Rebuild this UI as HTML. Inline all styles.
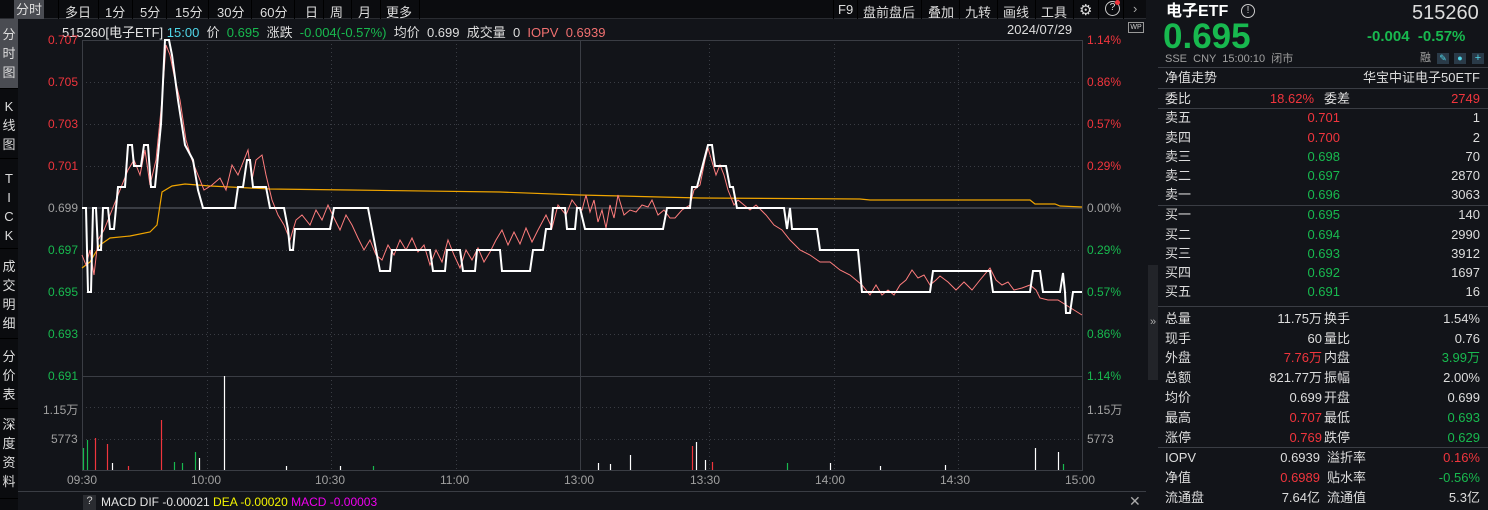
<!DOCTYPE html>
<html><head><meta charset="utf-8"><style>
*{margin:0;padding:0;box-sizing:border-box}
body{width:1488px;height:510px;background:#121419;overflow:hidden;position:relative;font-family:"Liberation Sans","Noto Sans CJK SC",sans-serif;color:#ddd;font-size:13px}
.a{position:absolute;white-space:nowrap}
.r{color:#f0353d}.g{color:#18b94f}.w{color:#e6e6e6}.gy{color:#a0a0a0}
.sep{position:absolute;top:0;width:1px;height:19px;background:#000}
.side{position:absolute;left:0;width:18px;text-align:center;font-size:13px;line-height:19px;color:#ddd;border-bottom:1px solid #000}
.row{position:absolute;left:1158px;width:326px;height:20px;font-size:13px;line-height:20px}
.row span{position:absolute}
</style></head><body>
<!-- top bar -->
<div class="a" style="left:0;top:0;width:1146px;height:19px;background:#0b0c0f;border-bottom:1px solid #2a2c31"></div>
<div class="a" style="left:14px;top:0;width:30px;height:19px;background:#4a4c52;text-align:center;line-height:19px">分时</div>
<div class="sep" style="left:58px"></div><div class="sep" style="left:98px"></div><div class="sep" style="left:132px"></div><div class="sep" style="left:166px"></div><div class="sep" style="left:208px"></div><div class="sep" style="left:251px"></div><div class="sep" style="left:294px"></div><div class="sep" style="left:323px"></div><div class="sep" style="left:351px"></div><div class="sep" style="left:380px"></div><div class="sep" style="left:419px"></div>
<div class="sep" style="left:833px"></div><div class="sep" style="left:857px"></div><div class="sep" style="left:921px"></div><div class="sep" style="left:959px"></div><div class="sep" style="left:997px"></div><div class="sep" style="left:1035px"></div><div class="sep" style="left:1073px"></div><div class="sep" style="left:1098px"></div><div class="sep" style="left:1123px"></div>
<div class="a" style="top:2px;left:65px;font-size:13px">多日</div>
<div class="a" style="top:2px;left:105px">1分</div>
<div class="a" style="top:2px;left:140px">5分</div>
<div class="a" style="top:2px;left:175px">15分</div>
<div class="a" style="top:2px;left:217px">30分</div>
<div class="a" style="top:2px;left:260px">60分</div>
<div class="a" style="top:2px;left:305px">日</div>
<div class="a" style="top:2px;left:330px">周</div>
<div class="a" style="top:2px;left:358px">月</div>
<div class="a" style="top:2px;left:386px">更多</div>
<div class="a" style="top:2px;left:838px">F9</div>
<div class="a" style="top:2px;left:863px">盘前盘后</div>
<div class="a" style="top:2px;left:928px">叠加</div>
<div class="a" style="top:2px;left:965px">九转</div>
<div class="a" style="top:2px;left:1003px">画线</div>
<div class="a" style="top:2px;left:1041px">工具</div>
<div class="a" style="top:1px;left:1079px;font-size:15px">⚙</div>
<div class="a" style="top:1px;left:1105px;width:15px;height:15px;border:1.5px solid #ccc;border-radius:50%;font-size:10px;text-align:center;line-height:12px">?</div>
<div class="a" style="top:0px;left:1115px;width:5px;height:5px;background:#f0353d;border-radius:50%"></div>
<div class="a" style="top:1px;left:1133px;color:#aaa">›</div>
<!-- sidebar -->
<div class="a" style="left:0;top:19px;width:18px;height:491px;background:#0b0c0f"></div>
<div class="side" style="top:19px;height:70px;background:#4a4c52;padding-top:6px">分<br>时<br>图</div>
<div class="side" style="top:89px;height:70px;padding-top:8px">K<br>线<br>图</div>
<div class="side" style="top:159px;height:90px;padding-top:10px">T<br>I<br>C<br>K</div>
<div class="side" style="top:249px;height:90px;padding-top:8px">成<br>交<br>明<br>细</div>
<div class="side" style="top:339px;height:70px;padding-top:8px">分<br>价<br>表</div>
<div class="side" style="top:409px;height:90px;padding-top:6px">深<br>度<br>资<br>料</div>
<!-- header line -->
<div class="a" style="top:22px;left:62px;font-size:13px"><span class="w">515260[电子ETF]</span> <span style="color:#4fd6e8">15:00</span> &nbsp;价 &nbsp;<span class="g">0.695</span> &nbsp;涨跌 &nbsp;<span class="g">-0.004(-0.57%)</span> &nbsp;均价 &nbsp;0.699 &nbsp;成交量 &nbsp;0 &nbsp;<span style="color:#f07070">IOPV &nbsp;0.6939</span></div>
<div class="a" style="top:22px;left:1007px">2024/07/29</div>
<div class="a" style="top:22px;left:1128px;width:16px;height:11px;border:1px solid #999;font-size:7px;line-height:9px;text-align:center;color:#ccc">WP</div>
<!-- left axis -->
<div class="a r" style="top:33px;left:48px;font-size:12px">0.707</div>
<div class="a r" style="top:75px;left:48px;font-size:12px">0.705</div>
<div class="a r" style="top:117px;left:48px;font-size:12px">0.703</div>
<div class="a r" style="top:159px;left:48px;font-size:12px">0.701</div>
<div class="a gy" style="top:201px;left:48px;font-size:12px">0.699</div>
<div class="a g" style="top:243px;left:48px;font-size:12px">0.697</div>
<div class="a g" style="top:285px;left:48px;font-size:12px">0.695</div>
<div class="a g" style="top:327px;left:48px;font-size:12px">0.693</div>
<div class="a g" style="top:369px;left:48px;font-size:12px">0.691</div>
<div class="a gy" style="top:401px;left:43px;font-size:12px">1.15万</div>
<div class="a gy" style="top:432px;left:51px;font-size:12px">5773</div>
<!-- right axis -->
<div class="a r" style="top:33px;left:1087px;font-size:12px">1.14%</div>
<div class="a r" style="top:75px;left:1087px;font-size:12px">0.86%</div>
<div class="a r" style="top:117px;left:1087px;font-size:12px">0.57%</div>
<div class="a r" style="top:159px;left:1087px;font-size:12px">0.29%</div>
<div class="a gy" style="top:201px;left:1087px;font-size:12px">0.00%</div>
<div class="a g" style="top:243px;left:1087px;font-size:12px">0.29%</div>
<div class="a g" style="top:285px;left:1087px;font-size:12px">0.57%</div>
<div class="a g" style="top:327px;left:1087px;font-size:12px">0.86%</div>
<div class="a g" style="top:369px;left:1087px;font-size:12px">1.14%</div>
<div class="a gy" style="top:401px;left:1087px;font-size:12px">1.15万</div>
<div class="a gy" style="top:432px;left:1087px;font-size:12px">5773</div>
<!-- time labels -->
<div class="a gy" style="top:473px;left:67px;font-size:12px">09:30</div>
<div class="a gy" style="top:473px;left:191px;font-size:12px">10:00</div>
<div class="a gy" style="top:473px;left:315px;font-size:12px">10:30</div>
<div class="a gy" style="top:473px;left:440px;font-size:12px">11:00</div>
<div class="a gy" style="top:473px;left:564px;font-size:12px">13:00</div>
<div class="a gy" style="top:473px;left:690px;font-size:12px">13:30</div>
<div class="a gy" style="top:473px;left:815px;font-size:12px">14:00</div>
<div class="a gy" style="top:473px;left:940px;font-size:12px">14:30</div>
<div class="a gy" style="top:473px;left:1065px;font-size:12px">15:00</div>
<svg class="a" style="left:0;top:0" width="1146" height="510">
<g stroke="#3a3d44" stroke-width="1" stroke-dasharray="1,3">
<line x1="82" y1="82.5" x2="1082" y2="82.5"/><line x1="82" y1="124.5" x2="1082" y2="124.5"/><line x1="82" y1="166.5" x2="1082" y2="166.5"/><line x1="82" y1="250.5" x2="1082" y2="250.5"/><line x1="82" y1="292.5" x2="1082" y2="292.5"/><line x1="82" y1="334.5" x2="1082" y2="334.5"/><line x1="82" y1="407.5" x2="1082" y2="407.5"/><line x1="82" y1="439.5" x2="1082" y2="439.5"/>
<line x1="207.5" y1="40" x2="207.5" y2="470"/><line x1="331.5" y1="40" x2="331.5" y2="470"/><line x1="456.5" y1="40" x2="456.5" y2="470"/><line x1="709.5" y1="40" x2="709.5" y2="470"/><line x1="834.5" y1="40" x2="834.5" y2="470"/><line x1="958.5" y1="40" x2="958.5" y2="470"/>
</g>
<g stroke="#3a3d44" stroke-width="1" fill="none">
<rect x="82.5" y="40.5" width="1000" height="430"/>
<line x1="82" y1="376.5" x2="1082" y2="376.5"/>
<line x1="580.5" y1="40" x2="580.5" y2="470"/>
<line x1="82" y1="208" x2="1082" y2="208" stroke-width="2"/>
<line x1="18" y1="491.5" x2="1146" y2="491.5"/>
<line x1="1146.5" y1="0" x2="1146.5" y2="510" stroke="#2a2c31"/>
</g>
<polyline fill="none" stroke="#f0a500" stroke-width="1.2" points="82,268 90,262 100,245 110,238 130,236 150,232 157,225 162,192 172,186 185,184 210,186 270,189 350,190 500,192 580,195 700,198 860,199 870,200 1030,200 1035,204 1055,204 1060,206 1082,207"/>
<polyline fill="none" stroke="#ff7d7d" stroke-width="1" points="82,255 86,265 90,250 94,275 98,240 104,230 110,215 116,200 122,185 128,170 134,160 140,175 145,150 150,185 156,160 162,100 166,45 170,55 174,75 180,100 186,140 192,160 198,175 204,190 212,185 220,178 226,190 232,165 238,175 244,160 248,150 252,180 256,160 262,155 266,175 272,200 278,215 284,225 290,240 296,220 302,215 310,225 316,210 322,220 328,205 334,218 340,230 346,215 352,225 358,238 364,250 370,240 376,255 382,260 388,245 394,255 400,240 406,250 412,238 418,252 424,245 430,265 436,250 442,262 448,240 454,255 460,268 466,250 472,260 478,248 484,262 490,252 496,240 502,230 508,245 514,232 520,244 526,228 532,242 538,230 546,215 552,228 558,205 566,215 572,200 578,208 582,210 586,195 590,212 594,200 598,222 602,210 606,228 610,205 614,218 618,195 624,215 630,210 636,212 642,205 648,207 652,200 658,215 664,210 670,218 675,218 682,210 690,205 694,190 700,185 705,160 708,148 713,165 716,175 720,165 724,175 728,190 734,205 738,200 744,205 750,210 756,205 766,215 774,225 782,230 790,240 800,250 810,255 820,262 830,262 840,270 850,275 856,280 862,285 870,295 876,285 882,295 888,290 894,295 900,285 906,280 912,270 918,278 924,275 930,285 936,280 940,276 948,282 956,290 964,282 972,290 980,280 990,268 996,280 1002,285 1008,282 1014,290 1022,288 1030,285 1036,290 1040,298 1048,300 1058,300 1066,305 1074,310 1082,315"/>
<polyline fill="none" stroke="#fff" stroke-width="2" points="82,208 86,208 88,292 91,292 93,208 96,208 98,250 101,250 103,208 108,208 110,229 114,229 118,187 125,187 128,145 132,145 134,166 141,166 144,145 148,145 151,187 155,187 157,166 161,124 165,40 169,40 172,55 178,100 185,145 193,160 198,190 203,208 235,208 238,187 243,187 247,160 250,160 253,187 266,187 270,208 284,208 288,229 290,250 293,250 295,229 330,229 334,208 348,208 352,208 368,208 372,229 376,250 380,271 390,271 392,250 430,250 433,271 445,271 447,250 460,250 463,271 475,271 477,250 500,250 502,271 530,271 533,250 543,250 546,229 551,229 553,208 565,208 567,229 575,229 577,208 580,208 585,229 663,229 667,208 690,208 692,187 697,187 708,145 712,145 715,166 726,166 730,187 733,187 737,208 784,208 787,229 790,208 792,229 817,229 820,250 858,250 862,292 930,292 933,271 990,271 993,292 1030,292 1033,271 1040,271 1043,292 1060,292 1063,273 1065,292 1066,313 1070,313 1073,292 1082,292"/>
<g stroke-width="1.2">
<line x1="83.5" y1="470" x2="83.5" y2="448" stroke="#18b94f"/><line x1="87.5" y1="470" x2="87.5" y2="440" stroke="#18b94f"/><line x1="95.5" y1="470" x2="95.5" y2="438" stroke="#f0353d"/><line x1="107.5" y1="470" x2="107.5" y2="444" stroke="#f0353d"/><line x1="112.5" y1="470" x2="112.5" y2="463" stroke="#fff"/><line x1="128.5" y1="470" x2="128.5" y2="466" stroke="#f0353d"/><line x1="161.5" y1="470" x2="161.5" y2="420" stroke="#f0353d"/><line x1="174.5" y1="470" x2="174.5" y2="462" stroke="#18b94f"/><line x1="182.5" y1="470" x2="182.5" y2="463" stroke="#18b94f"/><line x1="195.5" y1="470" x2="195.5" y2="452" stroke="#18b94f"/><line x1="199.5" y1="470" x2="199.5" y2="458" stroke="#fff"/><line x1="224.5" y1="470" x2="224.5" y2="376" stroke="#fff"/><line x1="286.5" y1="470" x2="286.5" y2="466" stroke="#fff"/><line x1="340.5" y1="470" x2="340.5" y2="466" stroke="#fff"/><line x1="373.5" y1="470" x2="373.5" y2="466" stroke="#18b94f"/><line x1="598.5" y1="470" x2="598.5" y2="463" stroke="#fff"/><line x1="610.5" y1="470" x2="610.5" y2="464" stroke="#fff"/><line x1="630.5" y1="470" x2="630.5" y2="455" stroke="#fff"/><line x1="692.5" y1="470" x2="692.5" y2="446" stroke="#f0353d"/><line x1="696.5" y1="470" x2="696.5" y2="442" stroke="#fff"/><line x1="705.5" y1="470" x2="705.5" y2="460" stroke="#fff"/><line x1="712.5" y1="470" x2="712.5" y2="462" stroke="#f0353d"/><line x1="787.5" y1="470" x2="787.5" y2="463" stroke="#18b94f"/><line x1="830.5" y1="470" x2="830.5" y2="463" stroke="#fff"/><line x1="1035.5" y1="470" x2="1035.5" y2="448" stroke="#fff"/><line x1="1058.5" y1="470" x2="1058.5" y2="452" stroke="#fff"/><line x1="1063.5" y1="470" x2="1063.5" y2="464" stroke="#18b94f"/><line x1="945.5" y1="470" x2="945.5" y2="465" stroke="#fff"/><line x1="880.5" y1="470" x2="880.5" y2="466" stroke="#fff"/>
</g>
</svg>
<div class="a" style="top:495px;left:83px;width:13px;height:15px;background:#2a2c31;font-size:11px;text-align:center;color:#ccc">?</div>
<div class="a" style="top:495px;left:101px;font-size:12px"><span class="w">MACD DIF -0.00021</span> <span style="color:#f5f500">DEA -0.00020</span> <span style="color:#f000f0">MACD -0.00003</span></div>
<div class="a" style="top:494px;left:1129px;width:15px;height:15px;color:#aaa;font-size:14px;line-height:14px">✕</div>
<div class="a" style="top:265px;left:1148px;width:10px;height:115px;background:#222429;color:#aaa;font-size:11px;line-height:115px;text-align:center">»</div>
<!-- right panel -->
<div class="a" style="top:3px;left:1166px;font-size:16px;line-height:18px;font-weight:bold;color:#fff">电子ETF</div>
<div class="a" style="top:4px;left:1241px;width:14px;height:14px;border:1.5px solid #ccc;border-radius:50%;font-size:10px;line-height:11px;text-align:center;color:#ccc">!</div>
<div class="a" style="top:2px;left:1412px;font-size:20px;line-height:22px;color:#ddd">515260</div>
<div class="a g" style="top:21px;left:1163px;font-size:35px;line-height:32px;font-weight:bold">0.695</div>
<div class="a g" style="top:29px;left:1367px;font-size:15px;line-height:16px;font-weight:bold">-0.004 &nbsp;-0.57%</div>
<div class="a gy" style="top:53px;left:1165px;font-size:11px;line-height:13px">SSE &nbsp;CNY &nbsp;15:00:10 &nbsp;闭市</div>
<div class="a gy" style="top:52px;left:1420px;font-size:11px;line-height:13px">融</div>
<div class="a" style="top:53px;left:1437px;width:12px;height:11px;background:#2a3a48;color:#4fd6e8;font-size:9px;line-height:11px;text-align:center">✎</div>
<div class="a" style="top:53px;left:1454px;width:12px;height:11px;background:#2a3a48;color:#4fd6e8;font-size:9px;line-height:11px;text-align:center">●</div>
<div class="a" style="top:53px;left:1472px;width:12px;height:11px;background:#2a3a48;color:#4fd6e8;font-size:11px;line-height:11px;text-align:center">+</div>
<div class="a" style="top:67px;left:1158px;width:330px;height:1px;background:#3a3d44"></div>
<div class="row" style="top:68px"><span style="left:7px">净值走势</span><span style="right:4px">华宝中证电子50ETF</span></div>
<div class="a" style="top:88px;left:1158px;width:330px;height:1px;background:#3a3d44"></div>
<div class="row" style="top:89px"><span style="left:7px">委比</span><span class="r" style="right:170px">18.62%</span><span style="left:166px">委差</span><span class="r" style="right:4px">2749</span></div>
<div class="a" style="top:108px;left:1158px;width:330px;height:1px;background:#3a3d44"></div>
<div class="row" style="top:108px"><span style="left:7px">卖五</span><span class="r" style="right:144px">0.701</span><span style="right:4px">1</span></div>
<div class="row" style="top:128px"><span style="left:7px">卖四</span><span class="r" style="right:144px">0.700</span><span style="right:4px">2</span></div>
<div class="row" style="top:147px"><span style="left:7px">卖三</span><span class="g" style="right:144px">0.698</span><span style="right:4px">70</span></div>
<div class="row" style="top:166px"><span style="left:7px">卖二</span><span class="g" style="right:144px">0.697</span><span style="right:4px">2870</span></div>
<div class="row" style="top:185px"><span style="left:7px">卖一</span><span class="g" style="right:144px">0.696</span><span style="right:4px">3063</span></div>
<div class="a" style="top:205px;left:1158px;width:330px;height:1px;background:#3a3d44"></div>
<div class="row" style="top:205px"><span style="left:7px">买一</span><span class="g" style="right:144px">0.695</span><span style="right:4px">140</span></div>
<div class="row" style="top:225px"><span style="left:7px">买二</span><span class="g" style="right:144px">0.694</span><span style="right:4px">2990</span></div>
<div class="row" style="top:244px"><span style="left:7px">买三</span><span class="g" style="right:144px">0.693</span><span style="right:4px">3912</span></div>
<div class="row" style="top:263px"><span style="left:7px">买四</span><span class="g" style="right:144px">0.692</span><span style="right:4px">1697</span></div>
<div class="row" style="top:282px"><span style="left:7px">买五</span><span class="g" style="right:144px">0.691</span><span style="right:4px">16</span></div>
<div class="a" style="top:306px;left:1158px;width:330px;height:1px;background:#3a3d44"></div>
<div class="row" style="top:309px"><span style="left:7px">总量</span><span style="right:162px">11.75万</span><span style="left:166px">换手</span><span style="right:4px">1.54%</span></div>
<div class="row" style="top:329px"><span style="left:7px">现手</span><span style="right:162px">60</span><span style="left:166px">量比</span><span style="right:4px">0.76</span></div>
<div class="row" style="top:348px"><span style="left:7px">外盘</span><span class="r" style="right:162px">7.76万</span><span style="left:166px">内盘</span><span class="g" style="right:4px">3.99万</span></div>
<div class="row" style="top:368px"><span style="left:7px">总额</span><span style="right:162px">821.77万</span><span style="left:166px">振幅</span><span style="right:4px">2.00%</span></div>
<div class="row" style="top:388px"><span style="left:7px">均价</span><span style="right:162px">0.699</span><span style="left:166px">开盘</span><span style="right:4px">0.699</span></div>
<div class="row" style="top:408px"><span style="left:7px">最高</span><span class="r" style="right:162px">0.707</span><span style="left:166px">最低</span><span class="g" style="right:4px">0.693</span></div>
<div class="row" style="top:428px"><span style="left:7px">涨停</span><span class="r" style="right:162px">0.769</span><span style="left:166px">跌停</span><span class="g" style="right:4px">0.629</span></div>
<div class="a" style="top:447px;left:1158px;width:330px;height:1px;background:#3a3d44"></div>
<div class="row" style="top:448px"><span style="left:7px">IOPV</span><span style="right:164px">0.6939</span><span style="left:169px">溢折率</span><span class="r" style="right:4px">0.16%</span></div>
<div class="row" style="top:468px"><span style="left:7px">净值</span><span class="r" style="right:164px">0.6989</span><span style="left:169px">贴水率</span><span class="g" style="right:4px">-0.56%</span></div>
<div class="row" style="top:488px"><span style="left:7px">流通盘</span><span style="right:164px">7.64亿</span><span style="left:169px">流通值</span><span style="right:4px">5.3亿</span></div>
</body></html>
